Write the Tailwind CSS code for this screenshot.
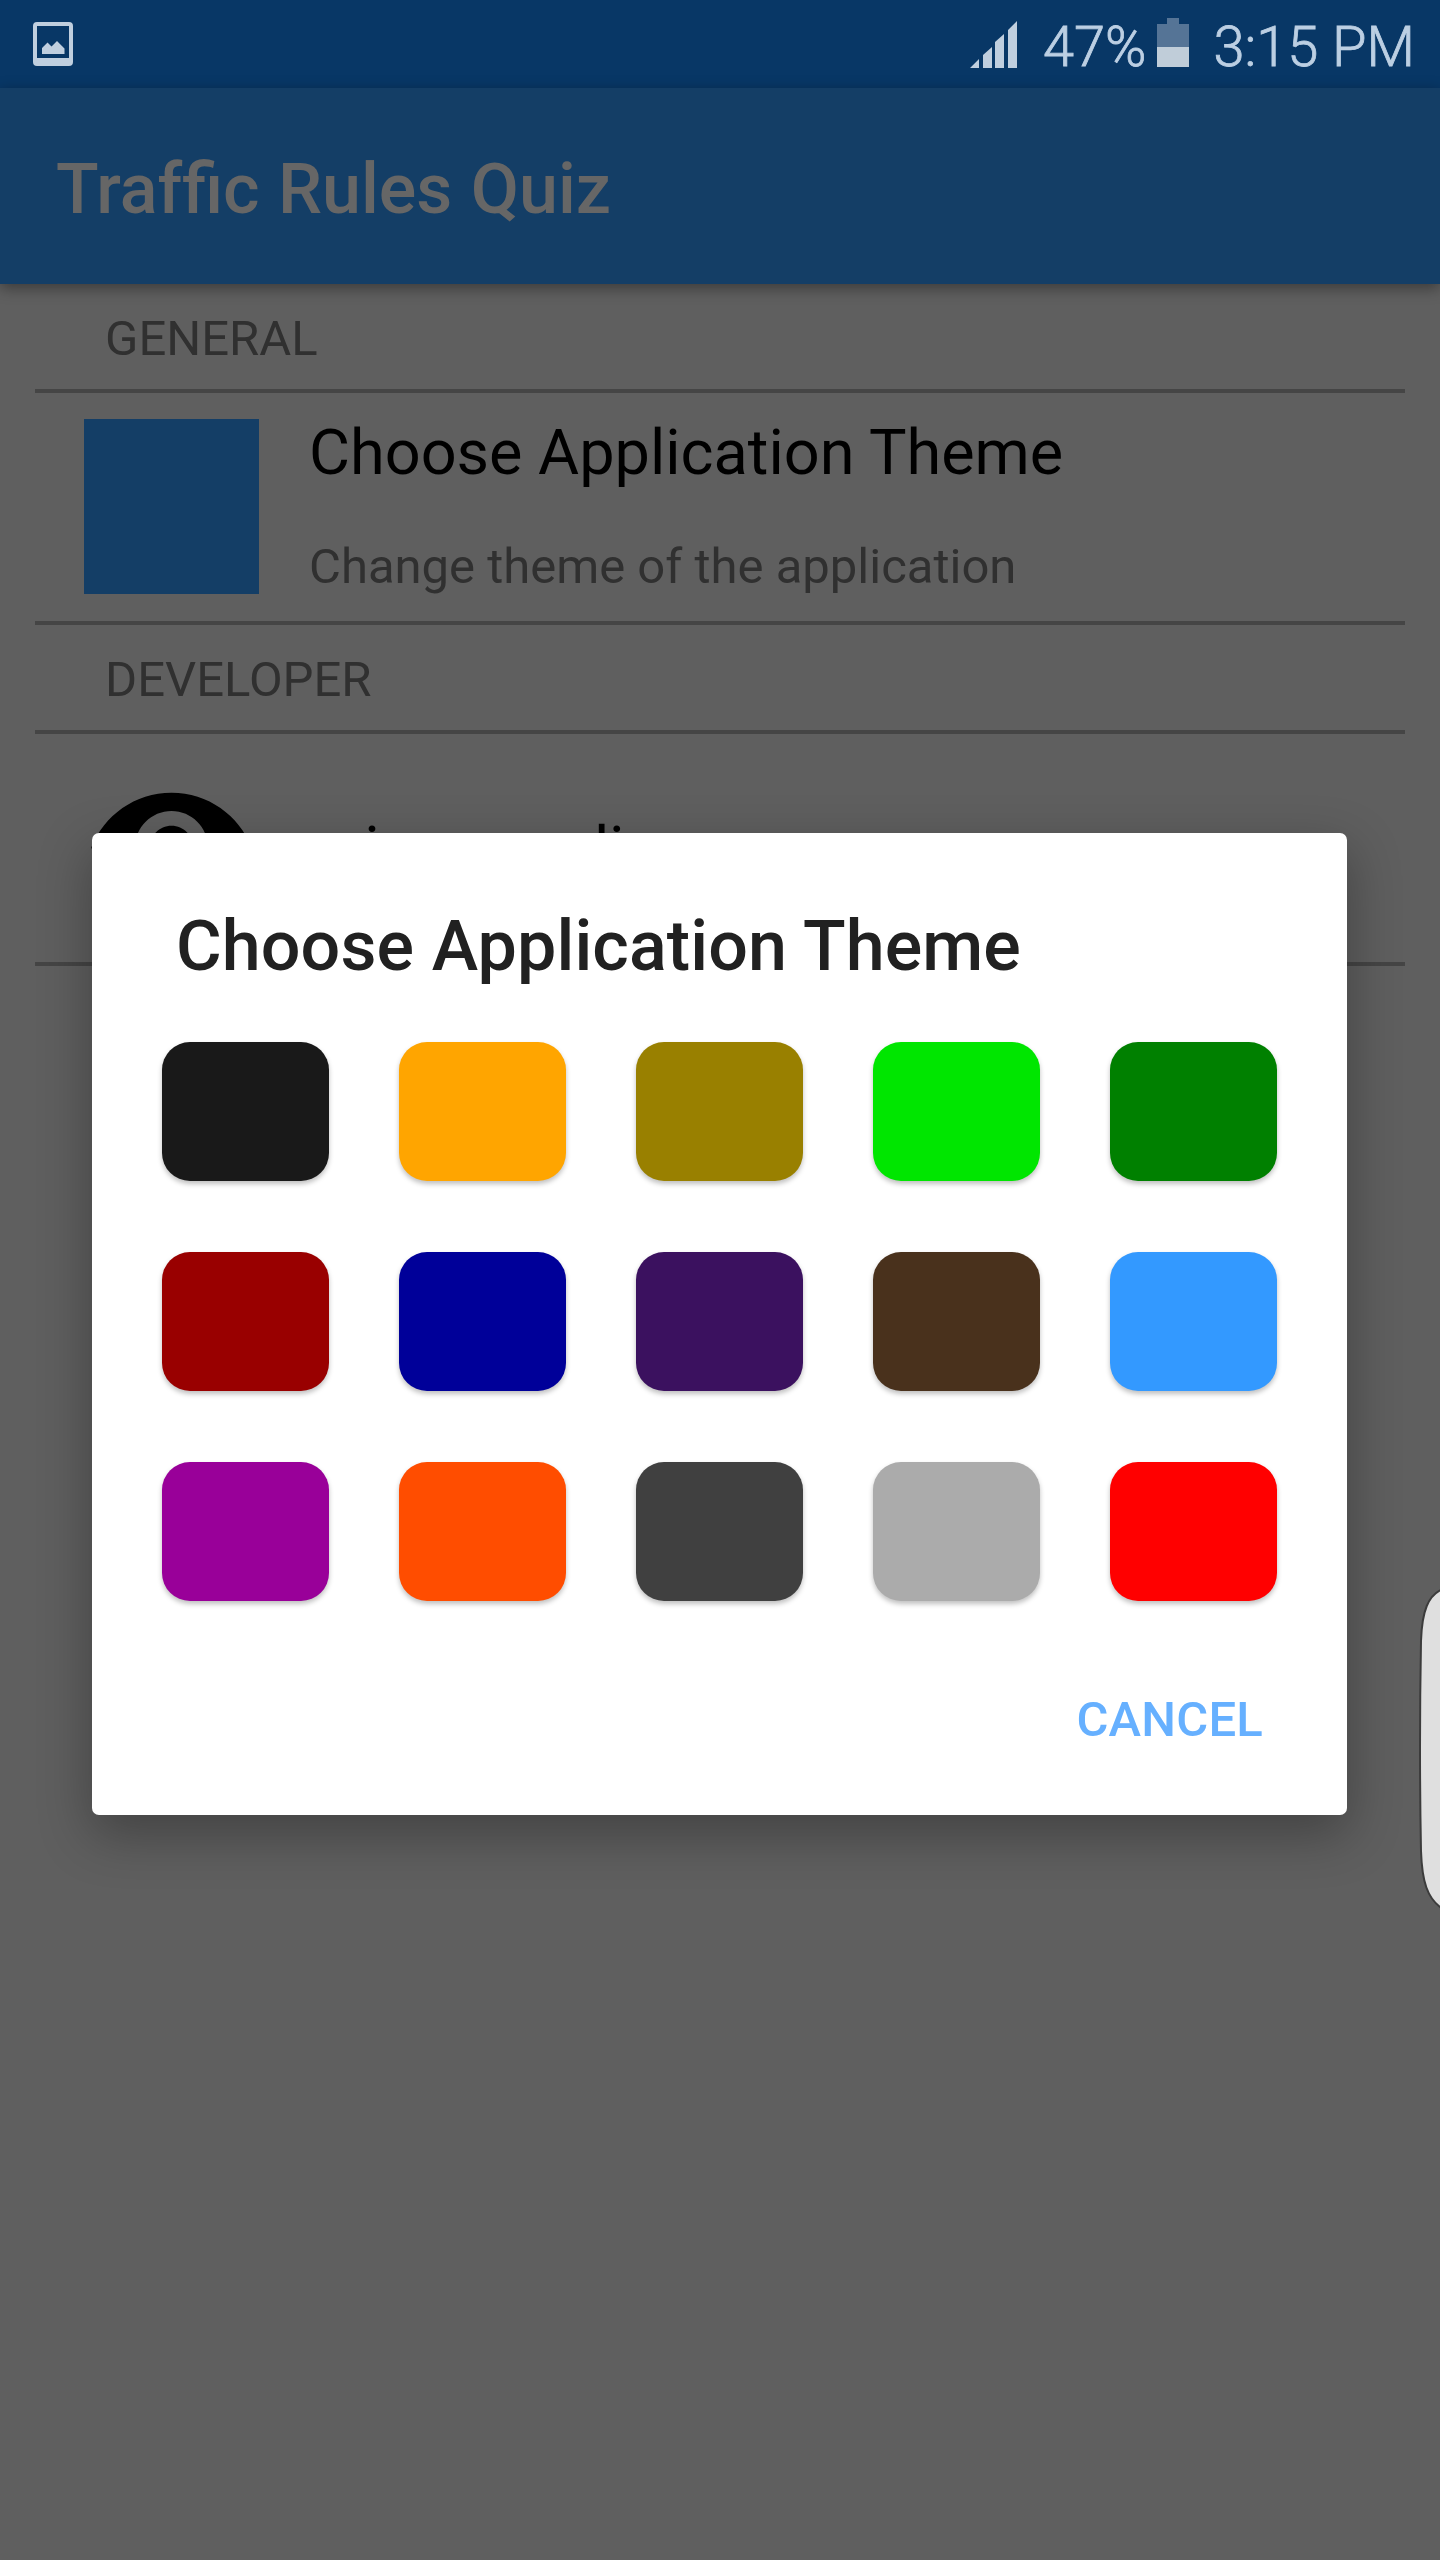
<!DOCTYPE html>
<html lang="en">
  <head>
    <meta charset="UTF-8" />
    <meta name="viewport" content="width=device-width, initial-scale=1.0" />
    <title>Traffic Rules Quiz</title>
    <script src="https://cdn.jsdelivr.net/npm/@tailwindcss/browser@4"></script>
  </head>
  <body class="bg-[#5f5f5f] font-[Roboto,sans-serif]">
    <div class="relative w-[1440px] h-[2560px] overflow-hidden">
      <!-- Status bar -->
      <div class="h-[88px] bg-[#083766] flex items-center justify-between pl-8 pr-[25px] text-[#bccfe3]">
        <svg class="w-[42px] h-[44px]" viewBox="0 0 42 44" fill="#c0cfdf">
          <path fill-rule="evenodd" d="M5 0h32a4 4 0 0 1 4 4v36a4 4 0 0 1-4 4H5a4 4 0 0 1-4-4V4a4 4 0 0 1 4-4zM5 4v32h32V4z" />
          <path d="M10 32v-6l5.500-5.500 4 4 5.500-5.500 7.500 7.500V32z" />
        </svg>
        <div class="flex items-center">
          <svg class="w-[48px] h-[47px] mr-[25px]" viewBox="0 0 48 47" fill="#c0cfdf">
            <path d="M0 47l9-9v9zM13 47V34l9-8v21zM25 47V21l9-8v34zM38 47V9l9-9v47z" />
          </svg>
          <span class="pt-[6px] text-[56px] leading-[88px] font-light [-webkit-text-stroke:0.8px_#bccfe3]">47%</span>
          <svg class="w-8 h-[49px] -mt-[3px] ml-[11px] mr-[24px]" viewBox="0 0 32 49">
            <path d="M10 0h12v6h10v23H0V6h10z" fill="#557496" />
            <path d="M0 29h32v20H0z" fill="#c0cdd9" />
          </svg>
          <span class="pt-[6px] text-[56px] leading-[88px] font-light [-webkit-text-stroke:0.8px_#bccfe3]">3:15 PM</span>
        </div>
      </div>

      <!-- App bar -->
      <div class="relative h-[196px] bg-[#143e66] flex items-center pl-14 pt-[6px] shadow-[0_4px_14px_rgba(0,0,0,0.4)]">
        <h1 class="text-[70px] font-medium [word-spacing:1px] text-[#666]">Traf<span class="inline-block">fic</span> Rules Quiz</h1>
      </div>

      <!-- Settings list -->
      <div class="mx-[35px]">
        <div class="h-[109px] pt-[4px] pl-[70px] border-b-4 border-[#454545] flex items-center text-[49px] text-[#303030]">GENERAL</div>
        <div class="h-[232px] pl-[49px] pt-[26px] border-b-4 border-[#454545] flex items-start">
          <div class="w-[175px] h-[175px] bg-[#143e66]"></div>
          <div class="-mt-[3px] ml-[50px] flex flex-col gap-12">
            <div class="text-[63px] leading-[74px] text-black">Choose Application Theme</div>
            <div class="text-[49px] leading-[58px] text-[#303030]">Change theme of the application</div>
          </div>
        </div>
        <div class="h-[109px] pt-[4px] pl-[70px] border-b-4 border-[#454545] flex items-center text-[49px] text-[#303030]">DEVELOPER</div>
        <div class="h-[232px] pl-[49px] pt-[26px] border-b-4 border-[#454545] flex items-start">
          <svg class="w-[175px] h-[175px]" viewBox="0 0 24 24">
            <path d="M12 4.500C7 4.500 2.730 7.610 1 12c1.730 4.390 6 7.500 11 7.500s9.270-3.110 11-7.500c-1.730-4.390-6-7.500-11-7.500zM12 17c-2.760 0-5-2.240-5-5s2.240-5 5-5 5 2.240 5 5-2.240 5-5 5zm0-8c-1.660 0-3 1.340-3 3s1.340 3 3 3 3-1.340 3-3-1.340-3-3-3z" />
          </svg>
          <div class="mt-[53px] ml-[50px] text-[63px] leading-[74px] text-black">micro media</div>
        </div>
      </div>

      <!-- Theme dialog -->
      <div class="absolute left-[92px] top-[833px] w-[1255px] h-[982px] bg-white rounded-[7px] px-[70px] shadow-[0_18px_52px_2px_rgba(0,0,0,0.3)]">
        <h2 class="pt-[72px] pl-[14px] text-[70px] leading-[82px] font-medium tracking-[0.1px] text-[#212121]">Choose Application Theme</h2>
        <div class="mt-[55px] grid grid-cols-5 gap-x-[70px] gap-y-[71px]">
          <button class="h-[139px] rounded-[28px] bg-[#191919] shadow-[0_3px_5px_rgba(0,0,0,0.25)]"></button>
          <button class="h-[139px] rounded-[28px] bg-[#ffa500] shadow-[0_3px_5px_rgba(0,0,0,0.25)]"></button>
          <button class="h-[139px] rounded-[28px] bg-[#998000] shadow-[0_3px_5px_rgba(0,0,0,0.25)]"></button>
          <button class="h-[139px] rounded-[28px] bg-[#00e600] shadow-[0_3px_5px_rgba(0,0,0,0.25)]"></button>
          <button class="h-[139px] rounded-[28px] bg-[#008000] shadow-[0_3px_5px_rgba(0,0,0,0.25)]"></button>
          <button class="h-[139px] rounded-[28px] bg-[#990000] shadow-[0_3px_5px_rgba(0,0,0,0.25)]"></button>
          <button class="h-[139px] rounded-[28px] bg-[#000099] shadow-[0_3px_5px_rgba(0,0,0,0.25)]"></button>
          <button class="h-[139px] rounded-[28px] bg-[#3b115f] shadow-[0_3px_5px_rgba(0,0,0,0.25)]"></button>
          <button class="h-[139px] rounded-[28px] bg-[#49311c] shadow-[0_3px_5px_rgba(0,0,0,0.25)]"></button>
          <button class="h-[139px] rounded-[28px] bg-[#3399ff] shadow-[0_3px_5px_rgba(0,0,0,0.25)]"></button>
          <button class="h-[139px] rounded-[28px] bg-[#990099] shadow-[0_3px_5px_rgba(0,0,0,0.25)]"></button>
          <button class="h-[139px] rounded-[28px] bg-[#ff4d00] shadow-[0_3px_5px_rgba(0,0,0,0.25)]"></button>
          <button class="h-[139px] rounded-[28px] bg-[#404040] shadow-[0_3px_5px_rgba(0,0,0,0.25)]"></button>
          <button class="h-[139px] rounded-[28px] bg-[#ababab] shadow-[0_3px_5px_rgba(0,0,0,0.25)]"></button>
          <button class="h-[139px] rounded-[28px] bg-[#ff0000] shadow-[0_3px_5px_rgba(0,0,0,0.25)]"></button>
        </div>
        <div class="mt-[89px] pr-[14px] flex justify-end">
          <button class="text-[49px] leading-[60px] font-medium tracking-[0.2px] text-[#66b0ff]">CANCEL</button>
        </div>
      </div>

      <!-- Edge panel handle -->
      <svg class="absolute right-0 top-[1585px] w-[21px] h-[328px]" viewBox="0 0 21 328" fill="#dfdfdf" stroke="#3c3c3c" stroke-width="2">
        <path d="M24 4C9 10 3 26 2 56Q0 164 2 266C3 296 8 314 24 324z" />
      </svg>
    </div>
  </body>
</html>
